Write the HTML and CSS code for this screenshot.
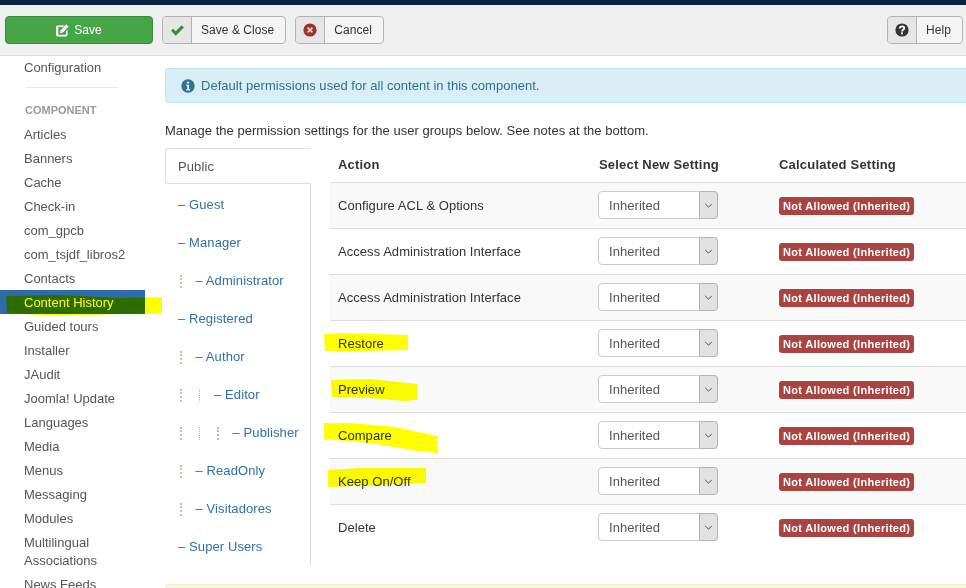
FILE: index.html
```html
<!DOCTYPE html>
<html lang="en">
<head>
    <meta charset="UTF-8">
    <meta name="viewport" content="width=device-width, initial-scale=1.0">
    <title>Permissions</title>
    <link rel="stylesheet" href="styles.css">
</head>
<body>
    <div class="topbar"></div>

    <div class="toolbar">
        <button class="btn btn-save">
            <svg class="save-icon" viewBox="0 0 14 14" width="13" height="13">
                <path fill="#fff" d="M1.8 1.5H9L7.4 3.1H2.9a.4.4 0 0 0-.4.4v7.7c0 .2.2.4.4.4h7.6c.2 0 .4-.2.4-.4V7.6l1.5-1.5v5.5c0 1-.8 1.8-1.8 1.8H1.8C.8 13.4 0 12.6 0 11.6V3.3c0-1 .8-1.8 1.8-1.8z"/>
                <path fill="#fff" d="M11 .4 13.6 3 7.5 9.2 4.4 9.9l.7-3.2z"/>
            </svg>
            Save
        </button>
        <button class="btn btn-split">
            <span class="btn-icon">
                <svg viewBox="0 0 14 12" width="13" height="11"><path fill="#3f8a3a" d="M0 6.2 2.2 4l2.9 2.9L11.6.4 14 2.7 5.1 11.6z"/></svg>
            </span>
            <span class="btn-label">Save &amp; Close</span>
        </button>
        <button class="btn btn-split">
            <span class="btn-icon">
                <svg viewBox="0 0 14 14" width="14" height="14">
                    <circle cx="7" cy="7" r="6.6" fill="#a0302c"/>
                    <path stroke="#eccfce" stroke-width="1.7" d="M4.6 4.6l4.8 4.8M9.4 4.6l-4.8 4.8"/>
                </svg>
            </span>
            <span class="btn-label">Cancel</span>
        </button>
        <button class="btn btn-split btn-help">
            <span class="btn-icon">
                <svg viewBox="0 0 14 14" width="14" height="14">
                    <circle cx="7" cy="7" r="6.6" fill="#333"/>
                    <path fill="none" stroke="#fff" stroke-width="1.8" d="M4.7 5.4c0-1.3 1-2 2.3-2s2.3.8 2.3 1.9c0 1.6-2.3 1.5-2.3 3.1"/>
                    <rect x="6" y="9.4" width="2" height="1.9" fill="#fff"/>
                </svg>
            </span>
            <span class="btn-label">Help</span>
        </button>
    </div>

    <div class="main">
        <div class="sidebar">
            <a class="side-link">Configuration</a>
            <hr class="side-rule">
            <div class="side-title">COMPONENT</div>
            <a class="side-link">Articles</a>
            <a class="side-link">Banners</a>
            <a class="side-link">Cache</a>
            <a class="side-link">Check-in</a>
            <a class="side-link">com_gpcb</a>
            <a class="side-link">com_tsjdf_libros2</a>
            <a class="side-link">Contacts</a>
            <a class="side-link active">Content History</a>
            <a class="side-link">Guided tours</a>
            <a class="side-link">Installer</a>
            <a class="side-link">JAudit</a>
            <a class="side-link">Joomla! Update</a>
            <a class="side-link">Languages</a>
            <a class="side-link">Media</a>
            <a class="side-link">Menus</a>
            <a class="side-link">Messaging</a>
            <a class="side-link">Modules</a>
            <a class="side-link wrap">Multilingual<br>Associations</a>
            <a class="side-link">News Feeds</a>
        </div>

        <div class="content">
            <div class="alert">
                <svg viewBox="0 0 14 14" width="14" height="14">
                    <circle cx="7" cy="7" r="6.7" fill="#31708f"/>
                    <rect x="5.9" y="2.6" width="2.2" height="2" fill="#d9edf7"/>
                    <path fill="#d9edf7" d="M5.2 5.8h2.9v4.3h1v1.3H5.2v-1.3h1V7.1h-1z"/>
                </svg>
                Default permissions used for all content in this component.
            </div>

            <p class="intro">Manage the permission settings for the user groups below. See notes at the bottom.</p>

            <div class="perms">
                <ul class="groups">
                    <li class="group current">Public</li>
                    <li class="group"><a>– Guest</a></li>
                    <li class="group"><a>– Manager</a></li>
                    <li class="group"><span class="lvl lvl1"></span><a>– Administrator</a></li>
                    <li class="group"><a>– Registered</a></li>
                    <li class="group"><span class="lvl lvl1"></span><a>– Author</a></li>
                    <li class="group"><span class="lvl lvl1"></span><span class="lvl lvl2"></span><a>– Editor</a></li>
                    <li class="group"><span class="lvl lvl1"></span><span class="lvl lvl2"></span><span class="lvl lvl3"></span><a>– Publisher</a></li>
                    <li class="group"><span class="lvl lvl1"></span><a>– ReadOnly</a></li>
                    <li class="group"><span class="lvl lvl1"></span><a>– Visitadores</a></li>
                    <li class="group"><a>– Super Users</a></li>
                </ul>

                <table class="rules">
                    <thead>
                        <tr>
                            <th class="col-action">Action</th>
                            <th class="col-select">Select New Setting</th>
                            <th>Calculated Setting</th>
                        </tr>
                    </thead>
                    <tbody>
                        <tr>
                            <td>Configure ACL &amp; Options</td>
                            <td><div class="select"><span class="select-val">Inherited</span><span class="select-arrow"><svg viewBox="0 0 10 6" width="9" height="5"><path fill="none" stroke="#444" stroke-width="1.1" d="M1 1l4 4 4-4"/></svg></span></div></td>
                            <td><span class="badge">Not Allowed (Inherited)</span></td>
                        </tr>
                        <tr>
                            <td>Access Administration Interface</td>
                            <td><div class="select"><span class="select-val">Inherited</span><span class="select-arrow"><svg viewBox="0 0 10 6" width="9" height="5"><path fill="none" stroke="#444" stroke-width="1.1" d="M1 1l4 4 4-4"/></svg></span></div></td>
                            <td><span class="badge">Not Allowed (Inherited)</span></td>
                        </tr>
                        <tr>
                            <td>Access Administration Interface</td>
                            <td><div class="select"><span class="select-val">Inherited</span><span class="select-arrow"><svg viewBox="0 0 10 6" width="9" height="5"><path fill="none" stroke="#444" stroke-width="1.1" d="M1 1l4 4 4-4"/></svg></span></div></td>
                            <td><span class="badge">Not Allowed (Inherited)</span></td>
                        </tr>
                        <tr>
                            <td>Restore</td>
                            <td><div class="select"><span class="select-val">Inherited</span><span class="select-arrow"><svg viewBox="0 0 10 6" width="9" height="5"><path fill="none" stroke="#444" stroke-width="1.1" d="M1 1l4 4 4-4"/></svg></span></div></td>
                            <td><span class="badge">Not Allowed (Inherited)</span></td>
                        </tr>
                        <tr>
                            <td>Preview</td>
                            <td><div class="select"><span class="select-val">Inherited</span><span class="select-arrow"><svg viewBox="0 0 10 6" width="9" height="5"><path fill="none" stroke="#444" stroke-width="1.1" d="M1 1l4 4 4-4"/></svg></span></div></td>
                            <td><span class="badge">Not Allowed (Inherited)</span></td>
                        </tr>
                        <tr>
                            <td>Compare</td>
                            <td><div class="select"><span class="select-val">Inherited</span><span class="select-arrow"><svg viewBox="0 0 10 6" width="9" height="5"><path fill="none" stroke="#444" stroke-width="1.1" d="M1 1l4 4 4-4"/></svg></span></div></td>
                            <td><span class="badge">Not Allowed (Inherited)</span></td>
                        </tr>
                        <tr>
                            <td>Keep On/Off</td>
                            <td><div class="select"><span class="select-val">Inherited</span><span class="select-arrow"><svg viewBox="0 0 10 6" width="9" height="5"><path fill="none" stroke="#444" stroke-width="1.1" d="M1 1l4 4 4-4"/></svg></span></div></td>
                            <td><span class="badge">Not Allowed (Inherited)</span></td>
                        </tr>
                        <tr>
                            <td>Delete</td>
                            <td><div class="select"><span class="select-val">Inherited</span><span class="select-arrow"><svg viewBox="0 0 10 6" width="9" height="5"><path fill="none" stroke="#444" stroke-width="1.1" d="M1 1l4 4 4-4"/></svg></span></div></td>
                            <td><span class="badge">Not Allowed (Inherited)</span></td>
                        </tr>
                    </tbody>
                </table>
            </div>

            <div class="notes"></div>
        </div>
    </div>

    <!-- marker scribbles on top of the screenshot -->
    <svg class="marker" viewBox="0 0 966 588" width="966" height="588">
        <path d="M6 296 60 295 118 298 162 297 162 313 118 314 60 316 7 313z"/>
        <path d="M324 334 340 333 408 335 408 350 360 351 325 351z"/>
        <path d="M331 380 370 379 417 384 417 400 404 401 370 398 332 397z"/>
        <path d="M324 423 352 423 395 427 437 436 437 453 418 451 370 443 324 439z"/>
        <path d="M328 470 360 468 426 468 426 483 380 485 328 487z"/>
    </svg>
</body>
</html>
```

FILE: styles.css
```css
* {
    box-sizing: border-box;
}

html, body {
    height: 100%;
}

body {
    margin: 0;
    background-color: #ffffff;
    color: #333333;
    font-family: "Liberation Sans", Arial, sans-serif;
    font-size: 13px;
    line-height: 18px;
    display: flex;
    flex-direction: column;
    overflow: hidden;
}

a {
    color: #3071a9;
    text-decoration: none;
}

.topbar {
    height: 5px;
    background-color: #0c2242;
}

.toolbar {
    height: 51px;
    flex-shrink: 0;
    display: flex;
    align-items: flex-start;
    gap: 9px;
    padding: 11px 3px 0 5px;
    background-color: #f0f0f0;
    border-bottom: 1px solid #dcdcdc;
}

.btn {
    height: 28px;
    padding: 0;
    display: flex;
    align-items: stretch;
    border: 1px solid #b3b3b3;
    border-radius: 4px;
    background-color: #f5f5f5;
    color: #333333;
    font-family: inherit;
    font-size: 12px;
    cursor: pointer;
}

.btn-save {
    width: 148px;
    align-items: center;
    justify-content: center;
    gap: 5px;
    background-color: #46a546;
    border-color: #3b8a3b;
    color: #ffffff;
}

.save-icon {
    flex-shrink: 0;
}

.btn-icon {
    width: 29px;
    display: flex;
    align-items: center;
    justify-content: center;
    background-color: #e6e6e6;
    border-right: 1px solid #b3b3b3;
    border-radius: 3px 0 0 3px;
}

.btn-label {
    padding: 0 11px 0 9px;
    line-height: 26px;
    letter-spacing: 0.05px;
}

.btn-help {
    margin-left: auto;
}

.main {
    flex: 1;
    min-height: 0;
    display: flex;
    overflow: hidden;
}

.sidebar {
    width: 165px;
    flex-shrink: 0;
    color: #555555;
}

.side-link {
    display: block;
    height: 24px;
    padding-left: 24px;
    line-height: 24px;
    color: #555555;
}

.side-link.wrap {
    height: 42px;
    line-height: 18px;
    padding-top: 3px;
}

.side-link.active {
    width: 145px;
    margin: -1px 0 1px;
    padding-top: 1px;
    background-color: #2d6ca8;
    color: #ffffff;
}

.side-rule {
    width: 92px;
    height: 1px;
    margin: 7px 0 0 26px;
    border: 0;
    background-color: #e5e5e5;
}

.side-title {
    height: 22px;
    margin: 11px 0 2px;
    padding-left: 25px;
    font-size: 11px;
    font-weight: bold;
    line-height: 22px;
    color: #999999;
}

.content {
    flex: 1;
    min-width: 0;
}

.alert {
    height: 35px;
    margin-top: 12px;
    margin-right: -4px;
    padding-left: 15px;
    display: flex;
    align-items: center;
    gap: 6px;
    background-color: #d9edf7;
    border: 1px solid #bce8f1;
    border-radius: 3px;
    color: #31708f;
    letter-spacing: 0.03px;
}

.intro {
    margin: 19px 0 0;
    height: 18px;
    letter-spacing: 0.02px;
}

.perms {
    display: flex;
    margin-top: 8px;
}

.groups {
    width: 146px;
    flex-shrink: 0;
    margin: 0;
    padding: 0;
    height: 418px;
    list-style: none;
    border-right: 1px solid #dddddd;
}

.group {
    height: 38px;
    padding-left: 13px;
    display: flex;
    align-items: center;
    color: #555555;
    letter-spacing: 0.1px;
}

.group.current {
    height: 36px;
    margin: 0 -1px 2px 0;
    padding: 1px 0 0 12px;
    background-color: #ffffff;
    border: 1px solid #dddddd;
    border-right: 0;
    border-radius: 4px 0 0 4px;
}

.lvl {
    width: 3px;
    height: 13px;
    margin-left: 2px;
    margin-right: 13.5px;
    flex-shrink: 0;
    border-left: 2px dotted #d8b9a8;
}

.lvl + a {
    margin-left: -1px;
}

.lvl2 {
    border-left-color: #a9c4a2;
    border-left-width: 1px;
}

.lvl3 {
    border-left-color: #aab8d8;
}

.rules {
    margin-left: 19px;
    flex: 1;
    height: 402px;
    border-collapse: collapse;
    table-layout: fixed;
}

.rules th {
    height: 34px;
    padding: 1px 8px 0;
    text-align: left;
    font-size: 13px;
    letter-spacing: 0.2px;
    border-bottom: 1px solid #dddddd;
}

.col-action {
    width: 260px;
}

.col-select {
    width: 181px;
}

.rules th.col-select {
    padding-left: 9px;
}

.rules td {
    height: 46px;
    padding: 1px 8px 0;
    border-top: 1px solid #dddddd;
    letter-spacing: 0.05px;
}

.rules tbody tr:nth-child(odd) {
    background-color: #f9f9f9;
}

.select {
    width: 120px;
    height: 28px;
    margin-top: -1px;
    display: flex;
    background-color: #ffffff;
    border: 1px solid #cccccc;
    border-radius: 4px;
    color: #555555;
}

.select-val {
    flex: 1;
    padding-left: 10px;
    line-height: 27px;
    height: 26px;
}

.select-arrow {
    width: 19px;
    margin: -1px -1px -1px 0;
    display: flex;
    align-items: center;
    justify-content: center;
    background-color: #e2e2e2;
    border: 1px solid #b5b5b5;
    border-radius: 0 4px 4px 0;
}

.badge {
    display: inline-block;
    height: 18px;
    padding: 0 4px;
    background-color: #a94442;
    border-radius: 3px;
    color: #ffffff;
    font-size: 11px;
    font-weight: bold;
    line-height: 18px;
    letter-spacing: 0.32px;
    white-space: nowrap;
}

.notes {
    height: 30px;
    margin-top: 18px;
    margin-right: -4px;
    background-color: #fcf8e3;
    border: 1px solid #faebcc;
    border-radius: 3px;
}

.marker {
    position: absolute;
    top: 0;
    left: 0;
    fill: #ffff00;
    mix-blend-mode: multiply;
    pointer-events: none;
}
```
